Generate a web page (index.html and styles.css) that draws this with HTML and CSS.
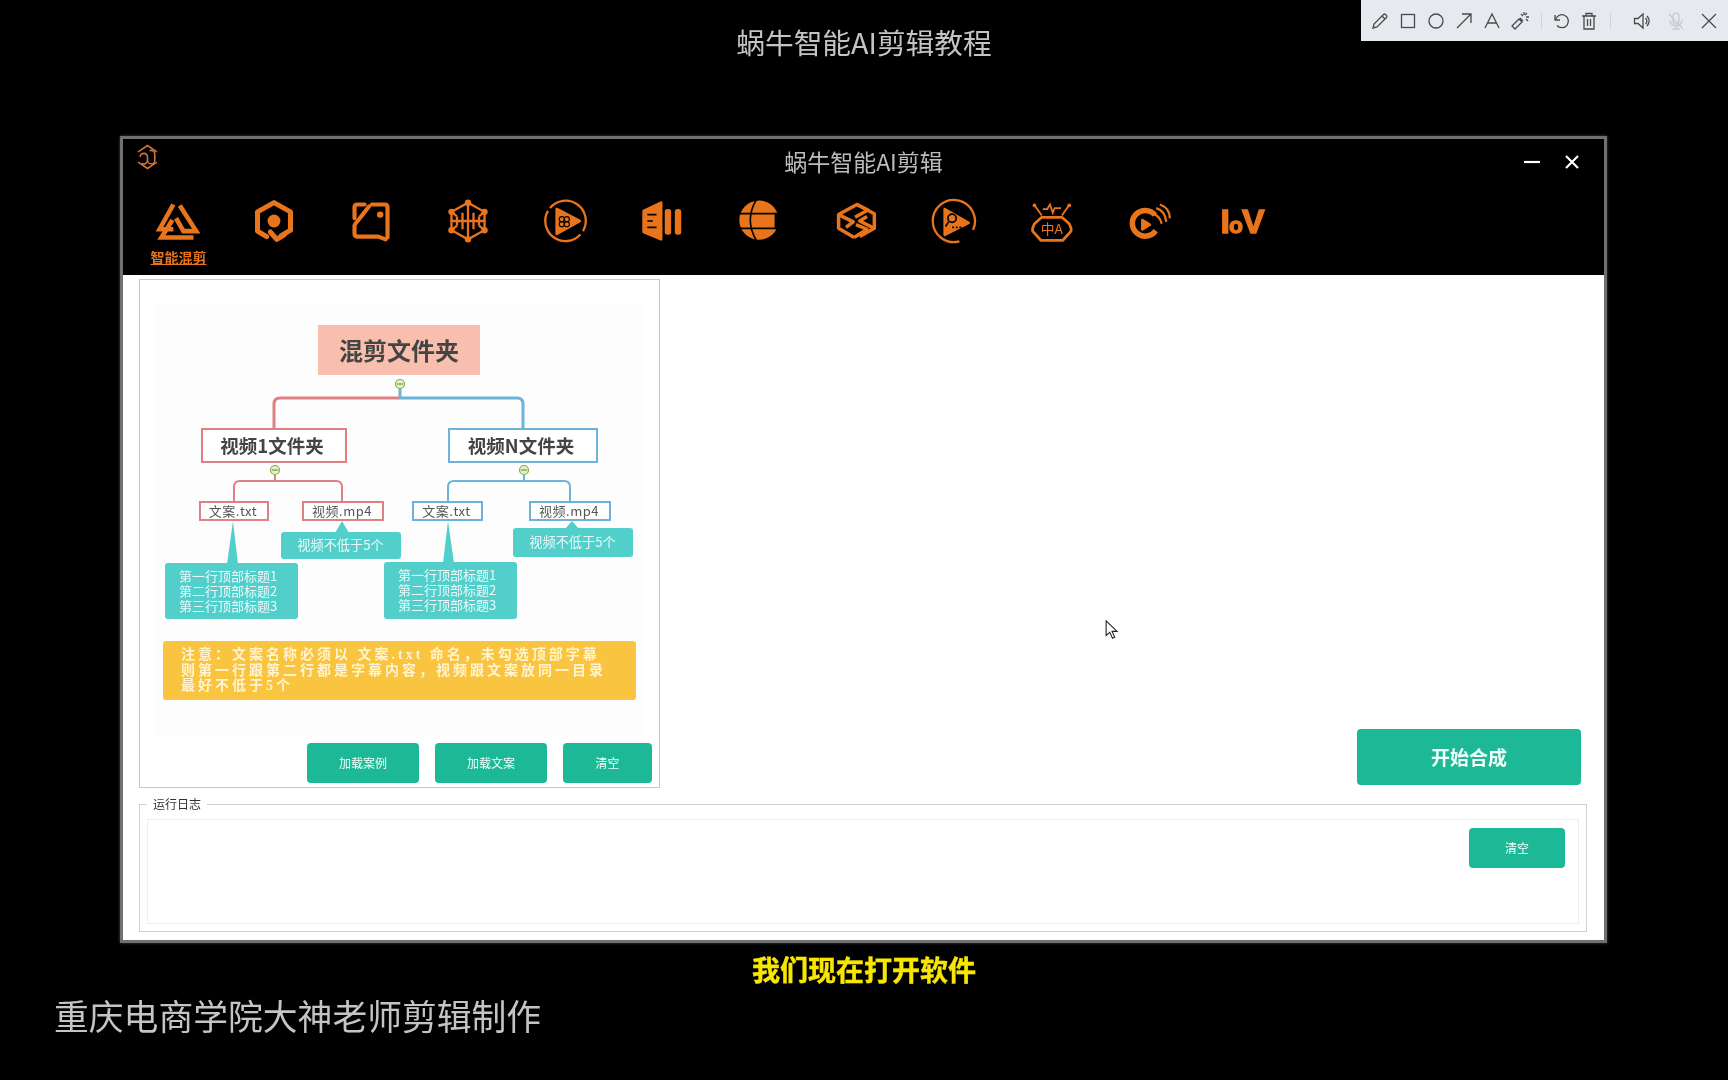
FILE: index.html
```html
<!DOCTYPE html>
<html lang="zh-CN">
<head>
<meta charset="utf-8">
<title>蜗牛智能AI剪辑教程</title>
<link rel="stylesheet" href="styles.css">
</head>
<body>
<div class="page">
  <div class="toolbar">
    <svg class="tool" viewBox="0 0 20 20"><path d="M3 17l1-4L13.500 3.500a1.500 1.500 0 0 1 2 0l1 1a1.500 1.500 0 0 1 0 2L7 16z"/><path d="M12 5l3 3"/></svg>
    <svg class="tool" viewBox="0 0 20 20"><rect x="3.500" y="3.500" width="13" height="13"/></svg>
    <svg class="tool" viewBox="0 0 20 20"><circle cx="10" cy="10" r="7"/></svg>
    <svg class="tool" viewBox="0 0 20 20"><path d="M3 17L17 3M8 3h9v9"/></svg>
    <svg class="tool" viewBox="0 0 20 20"><path d="M3 17L10 3l7 14M5.500 12h9"/></svg>
    <svg class="tool" viewBox="0 0 20 20"><path d="M2 15l7-7 3 3-7 7zM2 15l3 3M10 7l3 3"/><path d="M14 1v3M19 6h-3M18 10l-2-2M11 3l2 2M17 2l-2 2"/></svg>
    <span class="tool-sep"></span>
    <svg class="tool" viewBox="0 0 20 20"><path d="M4 4v5h5"/><path d="M4.500 9A6.500 6.500 0 1 1 6 14.500"/></svg>
    <svg class="tool" viewBox="0 0 20 20"><path d="M3 5h14M7 5V2.500h6V5M5 5v13h10V5M8.500 8v7M11.500 8v7"/></svg>
    <span class="tool-sep tool-sep-wide"></span>
    <svg class="tool" viewBox="0 0 20 20"><path d="M2.500 7.500h3.500L11 3v14l-5-4.500H2.500z"/><path d="M13.500 7a4 4 0 0 1 0 6M15 5a7 7 0 0 1 0 10"/></svg>
    <svg class="tool tool-off" viewBox="0 0 20 20"><rect x="7" y="2" width="6" height="11" rx="3"/><path d="M4 9a6 6 0 0 0 12 0M10 15v3M6 18h8M3 3l14 15"/></svg>
    <svg class="tool" viewBox="0 0 20 20"><path d="M3 3l14 14M17 3L3 17"/></svg>
  </div>

  <h1 class="page-title">蜗牛智能AI剪辑教程</h1>

  <div class="window">
    <header class="win-head">
      <div class="titlebar">
        <svg class="logo" viewBox="0 0 24 24"><path d="M3 7l9-6 9 6M3 17l9 6 9-6"/><path d="M5 12a3.500 3.500 0 1 1 7 0v3a3.500 3.500 0 0 1-5.500 3"/><path d="M12 15a3.500 3.500 0 0 0 7 0V9a3.500 3.500 0 0 0-5-3"/></svg>
        <div class="win-title">蜗牛智能AI剪辑</div>
        <div class="win-ctrl">
          <svg class="ctrl" viewBox="0 0 16 16"><path d="M0 8h16"/></svg>
          <svg class="ctrl" viewBox="0 0 16 16"><path d="M2 2l12 12M14 2L2 14"/></svg>
        </div>
      </div>
      <nav class="nav">
        <div class="nav-item">
          <svg class="ico" viewBox="0 0 48 48"><g class="st45"><path d="M20 6L5 33H20"/><path d="M27 7L45 35H31L23 21"/><path d="M42 42H7L19 23"/></g></svg>
          <span class="nav-label">智能混剪</span>
        </div>
        <div class="nav-item">
          <svg class="ico" viewBox="0 0 48 48"><g class="st55"><path d="M16 41L6 35V14L24 4L42 14V34L32 40"/><path d="M20 36L27 44L35 39"/></g><circle class="fl" cx="24" cy="24" r="7"/></svg>
        </div>
        <div class="nav-item">
          <svg class="ico" viewBox="0 0 48 48"><g class="st4"><path d="M6 21V9q0-3 3-3h8"/><path d="M6 29v9q0 3 3 3h23l8 3"/><path d="M25 6h14q3 0 3 3v33"/><path d="M22 8L7 27"/></g><circle class="fl" cx="34" cy="17" r="3.500"/></svg>
        </div>
        <div class="nav-item">
          <svg class="ico" viewBox="0 0 48 48"><g class="st25"><path d="M24 4l18 10v20L24 44 6 34V14z"/><path d="M24 4v9M24 44v-9M6 14l6 5M42 14l-6 5M6 34l6-5M42 34l-6-5M5 24h38"/><path d="M12 19v10M18 15v18M24 13v22M30 15v18M36 19v10"/></g><circle class="fl" cx="24" cy="4" r="3.500"/><circle class="fl" cx="42" cy="14" r="3.500"/><circle class="fl" cx="42" cy="34" r="3.500"/><circle class="fl" cx="24" cy="44" r="3.500"/><circle class="fl" cx="6" cy="34" r="3.500"/><circle class="fl" cx="6" cy="14" r="3.500"/></svg>
        </div>
        <div class="nav-item">
          <svg class="ico" viewBox="0 0 48 48"><path class="st25" d="M7.600 9.900A22 22 0 0 1 43.600 35M40.800 38.700A22 22 0 0 1 5.400 13"/><path class="fl rj" d="M15 11L40 24L15 38z"/><g class="cut-thin"><circle cx="20.500" cy="22" r="2.800"/><circle cx="26" cy="22" r="2.800"/><circle cx="20.500" cy="27.500" r="2.800"/><circle cx="26" cy="27.500" r="2.800"/></g></svg>
        </div>
        <div class="nav-item">
          <svg class="ico" viewBox="0 0 48 48"><path class="fl rj" d="M4 13L23 4V44L4 36z"/><g class="cut"><path d="M8 17h10M8 24h6M8 31h10"/></g><rect class="fl" x="27" y="11" width="7" height="28" rx="3"/><rect class="fl" x="38" y="11" width="7" height="28" rx="3"/></svg>
        </div>
        <div class="nav-item">
          <svg class="ico" viewBox="0 0 48 48"><circle class="fl" cx="24" cy="23" r="21.500"/><g class="cut"><path d="M21 1Q8 23 21 45"/><path d="M2 16H47M2 32H47"/></g><path class="blk" d="M41 15H48V33H41z"/></svg>
        </div>
        <div class="nav-item">
          <svg class="ico" viewBox="0 0 48 48"><g class="st35"><path d="M22 42L5 32V17L25 6L44 16V32L28 41"/><path d="M5 17L21 25L13 31"/><path d="M25 6L37 12L23 20"/><path d="M44 32L28 24L36 19"/><path d="M22 42L36 33L24 28"/></g></svg>
        </div>
        <div class="nav-item">
          <svg class="ico" viewBox="0 0 48 48"><path class="st25" d="M31 46.200A23 23 0 1 1 45.800 33.700"/><path class="fl rj" d="M15 11L41 26L15 39z"/><g class="cut"><circle cx="23" cy="21" r="4.500"/><path d="M19 25l-3 5"/><path d="M23 31h2M27 31h2M31 31h2"/></g></svg>
        </div>
        <div class="nav-item">
          <svg class="ico" viewBox="0 0 48 48"><path class="st3" d="M15 20H37L45 27L47 32V35L38 45H14L5 35V32L7 27Z"/><path class="st2" d="M8 8L15 18M44 8L37 18M16 11H21L24 6L27 15L29 10H36"/><circle class="fl" cx="7" cy="7" r="2"/><circle class="fl" cx="45" cy="7" r="2"/><text class="bag-text" x="26" y="38" text-anchor="middle">中A</text></svg>
        </div>
        <div class="nav-item">
          <svg class="ico" viewBox="0 0 48 48"><path class="st6" d="M32.700 17.500A14 14 0 1 0 33.500 34.500"/><path class="fl rj" d="M19 23L27 28L19 33z"/><path class="st25" d="M30 16Q38 18 40 27M34 10Q44 13 45 25M38 6Q49 10 49 21"/></svg>
        </div>
        <div class="nav-item">
          <svg class="ico" viewBox="0 0 48 48"><text class="iov-text" x="22" y="37" text-anchor="middle">I<tspan class="iov-o">o</tspan>V</text></svg>
        </div>
      </nav>
    </header>

    <main class="win-body">
      <div class="top-row">
        <section class="panel">
          <div class="diagram">
            <svg class="links" viewBox="155 305 488 430">
              <path class="lk red lk3" d="M400 398H280q-6 0-6 6v24"/>
              <path class="lk blue lk3" d="M400 398H517q6 0 6 6v24"/>
              <path class="lk blue lk3" d="M400 388v10"/>
              <path class="lk red" d="M275 475v6M275 481H240q-6 0-6 6v14M275 481H336q6 0 6 6v14"/>
              <path class="lk blue" d="M524 475v6M524 481H454q-6 0-6 6v14M524 481H564q6 0 6 6v14"/>
              <path class="tip" d="M233 521l-6 43h11zM448 521l-5 42h11zM342 521l-7 12h14zM572 521l-7 8h14z"/>
              <circle class="dot" cx="400" cy="384" r="4.500"/>
              <circle class="dot" cx="275" cy="470" r="4.500"/>
              <circle class="dot" cx="524" cy="470" r="4.500"/>
              <path class="dash" d="M397 384h6M272 470h6M521 470h6"/>
            </svg>
            <div class="node root">混剪文件夹</div>
            <div class="node mid mid-red n1">视频1文件夹</div>
            <div class="node mid mid-blue n2">视频N文件夹</div>
            <div class="node leaf leaf-red l1">文案.txt</div>
            <div class="node leaf leaf-red l2">视频.mp4</div>
            <div class="node leaf leaf-blue l3">文案.txt</div>
            <div class="node leaf leaf-blue l4">视频.mp4</div>
            <div class="node call c1">视频不低于5个</div>
            <div class="node call c2">视频不低于5个</div>
            <div class="node block b1">第一行顶部标题1<br>第二行顶部标题2<br>第三行顶部标题3</div>
            <div class="node block b2">第一行顶部标题1<br>第二行顶部标题2<br>第三行顶部标题3</div>
            <div class="node note">注意&#xFF1A;文案名称必须以 文案.txt 命名&#xFF0C;未勾选顶部字幕<br>则第一行跟第二行都是字幕内容&#xFF0C;视频跟文案放同一目录<br>最好不低于5个</div>
          </div>
          <div class="panel-btns">
            <button class="btn btn-wide">加载案例</button>
            <button class="btn btn-wide">加载文案</button>
            <button class="btn btn-clear">清空</button>
          </div>
        </section>
        <div class="side">
          <button class="btn btn-start">开始合成</button>
        </div>
      </div>
      <fieldset class="log">
        <legend class="log-legend">运行日志</legend>
        <div class="log-box">
          <button class="btn btn-log">清空</button>
        </div>
      </fieldset>
    </main>
  </div>

  <div class="caption">我们现在打开软件</div>
  <div class="credit">重庆电商学院大神老师剪辑制作</div>

  <svg class="cursor" viewBox="0 0 16 22"><path d="M1 1v16l4-3.500 3 6.500 2.500-1-3-6.500H13z"/></svg>
</div>
</body>
</html>
```
FILE: styles.css
```css
* { box-sizing: border-box; }
html, body { margin: 0; padding: 0; background: #000; }
body { font-family: "Noto Sans CJK SC", "Noto Sans", sans-serif; }
.page { position: relative; width: 1728px; height: 1080px; overflow: hidden; background: #000; filter: blur(0.4px); }

/* screen-recorder toolbar, lies over the page */
.toolbar { position: absolute; top: 0; right: 0; width: 367px; height: 41px; background: #e6e9ee; display: flex; align-items: center; padding-left: 9px; }
.tool { width: 20px; height: 20px; margin-right: 8px; flex: none; fill: none; stroke: #4a4a4a; stroke-width: 1.300; }
.tool-off { stroke: #c8cacd; margin-left: 6px; margin-right: 13px; }
.tool-sep { width: 1px; height: 16px; background: #cfd2d6; margin: 0 9px 0 3px; flex: none; }
.tool-sep-wide { margin: 0 21px 0 3px; }

.page-title { margin: 0 0 50px; height: 86px; padding-bottom: 3px; display: flex; align-items: center; justify-content: center; font-size: 28.700px; font-weight: 400; color: #c4c4c4; }

.window { width: 1487px; height: 807px; margin-left: 120px; border: 3px solid #707070; display: flex; flex-direction: column; background: #fff; box-shadow: 0 0 3px #444; }

.win-head { height: 136px; flex: none; background: #000; }
.titlebar { height: 46px; display: grid; grid-template-columns: 1fr auto 1fr; align-items: center; padding: 0 24px 0 24px; }
.logo { width: 25px; height: 26px; margin: -11px 0 0 -12px; fill: none; stroke: #d2743a; stroke-width: 1.500; }
.win-title { font-size: 23px; color: #bcbcbc; padding-bottom: 2px; }
.win-ctrl { display: flex; justify-content: flex-end; gap: 24px; }
.ctrl { width: 16px; height: 16px; fill: none; stroke: #fff; stroke-width: 2.200; }

.nav { display: flex; padding: 14px 0 0 5px; }
.nav-item { width: 97px; display: flex; flex-direction: column; align-items: center; }
.ico { width: 44px; height: 44px; flex: none; overflow: visible; }
.st2, .st25, .st3, .st35, .st4, .st45, .st55, .st6 { fill: none; stroke: #e8741c; }
.st2 { stroke-width: 2; }
.st25 { stroke-width: 2.500; }
.st3 { stroke-width: 3; stroke-linejoin: round; }
.st35 { stroke-width: 3.800; stroke-linejoin: round; }
.st4 { stroke-width: 4.500; stroke-linejoin: round; stroke-linecap: round; }
.st45 { stroke-width: 5; stroke-linejoin: miter; }
.st55 { stroke-width: 5.500; stroke-linejoin: round; stroke-linecap: round; }
.st6 { stroke-width: 6; }
.fl { fill: #e8741c; }
.blk { fill: #000; }
.rj { stroke: #e8741c; stroke-width: 3; stroke-linejoin: round; }
.cut { fill: none; stroke: #000; stroke-width: 1.800; }
.cut-thin { fill: none; stroke: #000; stroke-width: 1.200; }
.bag-text { font-size: 15px; font-weight: 400; fill: #e8741c; font-family: "Noto Sans CJK SC", sans-serif; }
.iov-text { font-size: 37px; font-weight: 700; fill: #e8741c; stroke: #e8741c; stroke-width: 1.500; font-family: "Liberation Sans", sans-serif; letter-spacing: -1px; }
.iov-o { font-size: 25px; }
.nav-label { margin: 6px 0 0 4px; font-size: 14px; line-height: 16px; font-weight: 700; color: #e8741c; text-decoration: underline; }

.win-body { flex: 1; display: flex; flex-direction: column; padding: 4px 17px 0 16px; background: #fff; }
.top-row { display: flex; height: 509px; flex: none; }
.panel { width: 521px; height: 509px; border: 1px solid #c8c8c8; display: flex; flex-direction: column; flex: none; background: #fff; }
.side { flex: 1; display: flex; align-items: flex-end; justify-content: flex-end; padding: 0 6px 3px 0; }

.diagram { position: relative; width: 488px; height: 430px; margin: 25px 0 8px 15px; background: #fdfdfd; flex: none; }
.links { position: absolute; left: 0; top: 0; width: 488px; height: 430px; }
.lk { fill: none; stroke-width: 2; }
.lk3 { stroke-width: 3; }
.red { stroke: #e08083; }
.blue { stroke: #6db3d9; }
.tip { fill: #52cfcb; }
.dot { fill: #e4f0c8; stroke: #7db24a; stroke-width: 1.200; }
.dash { fill: none; stroke: #5a8a3a; stroke-width: 1; }

.node { position: absolute; display: flex; align-items: center; justify-content: center; white-space: nowrap; }
.root { left: 163px; top: 20px; width: 162px; height: 50px; background: #f8bfae; font-size: 24px; font-weight: 700; color: #444; padding-bottom: 2px; }
.mid { top: 123px; height: 35px; background: #fff; font-size: 18.500px; font-weight: 700; color: #444; border: 2px solid; padding: 0 4px 2px 0; }
.mid-red { border-color: #e08083; }
.mid-blue { border-color: #6db3d9; }
.n1 { left: 46px; width: 146px; }
.n2 { left: 293px; width: 150px; }
.leaf { top: 196px; height: 20px; background: #fff; font-size: 13px; letter-spacing: 0.500px; color: #555; border: 2px solid; padding: 0 2px 2px 0; }
.leaf-red { border-color: #e08083; }
.leaf-blue { border-color: #6db3d9; }
.l1 { left: 44px; width: 70px; }
.l2 { left: 147px; width: 82px; }
.l3 { left: 257px; width: 71px; }
.l4 { left: 374px; width: 82px; }
.call { width: 120px; background: #52cfcb; color: #eafafa; font-size: 13.200px; border-radius: 3px; padding: 0 1px 2px 0; }
.c1 { left: 126px; top: 227px; height: 27px; }
.c2 { left: 358px; top: 223px; height: 29px; }
.block { width: 133px; background: #52cfcb; color: #eafafa; font-size: 13px; line-height: 15px; border-radius: 3px; justify-content: flex-start; padding: 0 0 2px 14px; }
.b1 { left: 10px; top: 258px; height: 56px; }
.b2 { left: 229px; top: 257px; height: 57px; }
.note { left: 8px; top: 336px; width: 473px; height: 59px; background: #f9c440; color: #fff4cf; font-family: "Liberation Serif", "Noto Sans CJK SC", serif; font-size: 14px; line-height: 15.500px; font-weight: 700; letter-spacing: 3px; border-radius: 3px; justify-content: flex-start; padding: 0 0 0 18px; }

.panel-btns { display: flex; justify-content: flex-end; gap: 16px; padding-right: 7px; }
.btn { border: 0; padding: 0 0 2px; margin: 0; background: #1db996; color: #f2fffb; border-radius: 4px; font-family: "Noto Sans CJK SC", "Noto Sans", sans-serif; font-size: 12px; display: flex; align-items: center; justify-content: center; flex: none; }
.btn-wide { width: 112px; height: 40px; }
.btn-clear { width: 89px; height: 40px; }
.btn-start { width: 224px; height: 56px; font-size: 19px; font-weight: 700; }
.btn-log { width: 96px; height: 40px; }

.log { margin: 8px 0 0; padding: 0 7px 7px; border: 1px solid #d0d0d0; width: 1448px; height: 136px; min-width: 0; }
.log-legend { margin-left: 0; padding: 0 6px; font-size: 12px; line-height: 16px; color: #333; }
.log-box { height: 105px; margin-top: 7px; border: 1px solid #eeeeee; display: flex; justify-content: flex-end; align-items: flex-start; padding: 8px 13px 0 0; }

.caption { margin-top: 6px; height: 40px; line-height: 40px; text-align: center; font-size: 28px; font-weight: 700; color: #f7e600; -webkit-text-stroke: 0.400px #f7e600; }
.credit { margin-top: 4px; height: 44px; line-height: 44px; padding-left: 54px; font-size: 34.800px; color: #c4c4c4; }

.cursor { position: absolute; left: 1105px; top: 620px; width: 15px; height: 20px; fill: #fff; stroke: #222; stroke-width: 1.200; }
```
